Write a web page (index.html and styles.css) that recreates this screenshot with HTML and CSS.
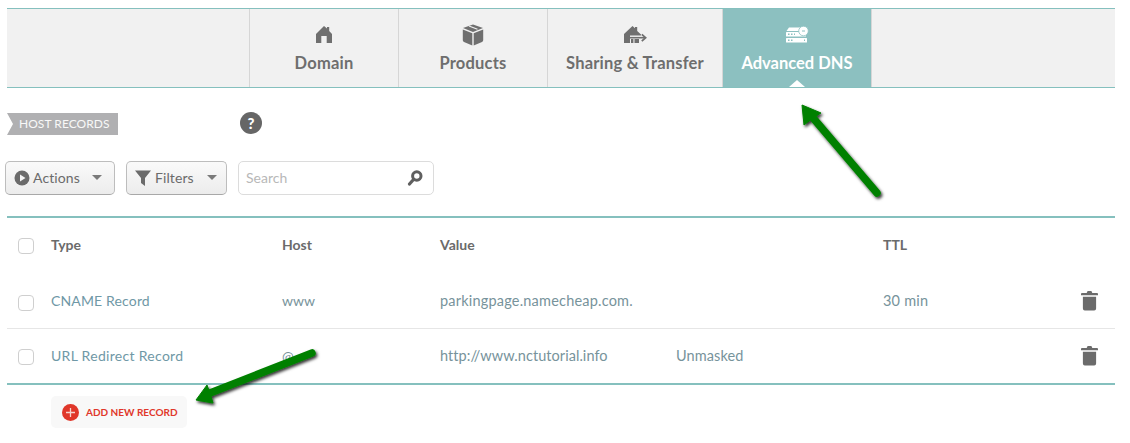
FILE: index.html
```html
<!DOCTYPE html>
<html lang="en">
<head>
<meta charset="utf-8">
<title>Advanced DNS</title>
<link rel="stylesheet" href="styles.css">
</head>
<body>
<div class="page">
  <nav class="tabs">
    <a class="tab tab-domain">
      <svg class="tab-icon" width="16" height="17" viewBox="0 0 16 17"><path d="M8 0 11 2.500V1h2.200V5L16 8V17H10.700V10H5.300V17H0V8Z" fill="#6f6f6f"/></svg>
      <span>Domain</span>
    </a>
    <a class="tab tab-products">
      <svg class="tab-icon" width="22" height="22" viewBox="0 0 22 22"><path d="M11 .5 21 4 11 8 1 4Z" fill="#6f6f6f"/><path d="M.8 5.500 10.300 9.300V21.500L2 18a2 2 0 0 1-1.200-1.800ZM21.200 5.500 11.700 9.300V21.500L20 18a2 2 0 0 0 1.200-1.800Z" fill="#6f6f6f"/><path d="M7 2 15.500 5.300" stroke="#f1f1f1" stroke-width="1.200"/></svg>
      <span>Products</span>
    </a>
    <a class="tab tab-sharing">
      <svg class="tab-icon" width="23" height="17" viewBox="0 0 23 17"><path d="M8.500 0 11 2.200V1h2.200V5L17 8.500V9.500H6V17H0V8Z" fill="#6f6f6f"/><path d="M6 11.700H21" stroke="#6f6f6f" stroke-width="1.600"/><path d="M7 13H9.400V17H7ZM10.500 13H15V17H10.500Z" fill="#6f6f6f"/><path d="m17.800 8.300 3.800 3.400-3.800 3.400" stroke="#6f6f6f" stroke-width="1.800" fill="none"/></svg>
      <span>Sharing &amp; Transfer</span>
    </a>
    <a class="tab tab-active">
      <svg class="tab-icon" width="24" height="18" viewBox="0 0 24 18"><path d="M4 1.500h11.500L17 5H1.500Z" fill="#fff"/><rect x="1" y="6" width="20" height="4.500" rx=".5" fill="#fff"/><rect x="1" y="12" width="21" height="4.500" rx=".5" fill="#fff"/><circle cx="18.500" cy="5" r="4.800" fill="#fff" stroke="#8cc0c0" stroke-width=".8"/><path d="M17 5h3" stroke="#8cc0c0"/><path d="M3 8.200h1.500M6 8.200h1.500M3 14.200h1.500M6 14.200h1.500M19 14.200h1M9 8.200h1" stroke="#8cc0c0" stroke-width="1.500"/></svg>
      <span>Advanced DNS</span>
    </a>
  </nav>

  <div class="section-head">
    <span class="ribbon">HOST RECORDS</span>
    <span class="help">?</span>
  </div>

  <div class="toolbar">
    <button class="btn btn-actions">
      <svg width="16" height="16" viewBox="0 0 16 16"><circle cx="8" cy="8" r="7.500" fill="#6b6b6b"/><path d="M6 4.500 11.500 8 6 11.500Z" fill="#f3f3f3"/></svg>
      <span class="btn-label">Actions</span>
      <i class="caret"></i>
    </button>
    <button class="btn btn-filters">
      <svg width="16" height="16" viewBox="0 0 16 16"><path d="M0 .5h16L10 8v8L6 13V8Z" fill="#6b6b6b"/></svg>
      <span class="btn-label">Filters</span>
      <i class="caret"></i>
    </button>
    <div class="search">
      <span class="btn-label">Search</span>
      <svg width="16" height="16" viewBox="0 0 16 16"><circle cx="9.800" cy="6" r="4.200" fill="none" stroke="#5f5f5f" stroke-width="3"/><path d="M6.500 9.500 2.500 14" stroke="#5f5f5f" stroke-width="3.200" stroke-linecap="round"/></svg>
    </div>
  </div>

  <div class="table">
    <div class="row row-head">
      <span class="check"></span>
      <span>Type</span>
      <span>Host</span>
      <span>Value</span>
      <span>TTL</span>
    </div>
    <div class="row row-one">
      <span class="check"></span>
      <span class="cell-type cell-cname">CNAME Record</span>
      <span class="cell-plain">www</span>
      <span class="cell-long">parkingpage.namecheap.com.</span>
      <span class="cell-long">30 min</span>
      <svg class="trash" width="17" height="21" viewBox="0 0 18 21"><path d="M6 2.500 7 .5h4l1 2h5a1 1 0 0 1 1 1V5H0V3.500a1 1 0 0 1 1-1ZM2 6.500h14V19a2 2 0 0 1-2 2H4a2 2 0 0 1-2-2Z" fill="#6b6b6b"/></svg>
    </div>
    <div class="row row-two">
      <span class="check"></span>
      <span class="cell-type cell-url">URL Redirect Record</span>
      <span class="cell-plain">@</span>
      <span class="cell-value cell-long"><span class="value-url">http://www.nctutorial.info</span><span class="value-mask">Unmasked</span></span>
      <span></span>
      <svg class="trash" width="17" height="21" viewBox="0 0 18 21"><path d="M6 2.500 7 .5h4l1 2h5a1 1 0 0 1 1 1V5H0V3.500a1 1 0 0 1 1-1ZM2 6.500h14V19a2 2 0 0 1-2 2H4a2 2 0 0 1-2-2Z" fill="#6b6b6b"/></svg>
    </div>
  </div>

  <button class="add-record">
    <svg width="17" height="17" viewBox="0 0 17 17"><circle cx="8.500" cy="8.500" r="8.500" fill="#e0372a"/><path d="M8.500 4v9M4 8.500h9" stroke="#f6d5d0" stroke-width="1.300"/></svg>
    <span>ADD NEW RECORD</span>
  </button>
</div>

<svg class="arrow arrow-up" width="90" height="105" viewBox="0 0 90 105">
  <defs><filter id="sh" x="-30%" y="-30%" width="160%" height="160%"><feDropShadow dx="1.500" dy="2" stdDeviation="1.500" flood-color="#000" flood-opacity=".8"/></filter></defs>
  <g filter="url(#sh)"><path d="M77 93 14 19" stroke="#008000" stroke-width="7.500" stroke-linecap="round"/><path d="M2 5 21 13 13 18 4 25Z" fill="#008000" stroke="#008000" stroke-linejoin="round"/></g>
</svg>
<svg class="arrow arrow-down" width="130" height="65" viewBox="0 0 130 65">
  <g filter="url(#sh)"><path d="M119 8 17 48" stroke="#008000" stroke-width="7.500" stroke-linecap="round"/><path d="M3 55 14 40 17 48 20 58Z" fill="#008000" stroke="#008000" stroke-linejoin="round"/></g>
</svg>
</body>
</html>
```
FILE: styles.css
```css
* { box-sizing: border-box; }
html, body { margin: 0; padding: 0; background: #fff; }
body {
  width: 1130px;
  height: 443px;
  overflow: hidden;
  position: relative;
  font-family: "Lato", "Open Sans", sans-serif;
  color: #6b6b6b;
}
.page { padding: 8px 15px 0 7px; }

.tabs {
  display: flex;
  height: 80px;
  padding-left: 242px;
  background: #f1f1f1;
  border-top: 1px solid #85c0be;
  border-bottom: 1px solid #85c0be;
}
.tab {
  display: flex;
  flex-direction: column;
  align-items: center;
  border-left: 1px solid #d6d6d6;
  font-size: 16.5px;
  font-weight: 700;
  letter-spacing: .2px;
  color: #6e6e6e;
  width: 149px;
  position: relative;
}
.tab span { position: absolute; top: 44px; white-space: nowrap; }
.tab-icon { position: absolute; }
.tab-domain .tab-icon { top: 17px; }
.tab-products .tab-icon { top: 15px; }
.tab-sharing { width: 175px; }
.tab-sharing .tab-icon { top: 17px; }
.tab-active {
  width: 150px;
  background: #8cc0c0;
  color: #fff;
  letter-spacing: 0;
  border-left: 1px solid #d6d6d6;
  border-right: 1px solid #d6d6d6;
}
.tab-active .tab-icon { top: 17px; }
.tab-active::after {
  content: "";
  position: absolute;
  left: 66px;
  bottom: 0;
  border-left: 8px solid transparent;
  border-right: 8px solid transparent;
  border-bottom: 7px solid #fff;
}

.section-head {
  display: flex;
  align-items: center;
  margin-top: 24px;
  height: 24px;
}
.ribbon {
  width: 111px;
  height: 22px;
  background: #b0b0b2;
  color: #f8f8f8;
  font-size: 12px;
  letter-spacing: .05px;
  line-height: 22px;
  padding-left: 12px;
  white-space: nowrap;
  clip-path: polygon(0 0, 100% 0, 100% 100%, 0 100%, 6px 50%);
}
.help {
  width: 22px;
  height: 22px;
  margin: 0 0 2px 122px;
  border-radius: 50%;
  background: #666;
  color: #fff;
  font-size: 15px;
  font-weight: 900;
  text-align: center;
  line-height: 22px;
}

.toolbar {
  display: flex;
  margin: 25px 0 0 -2px;
  height: 34px;
}
.btn {
  display: flex;
  align-items: center;
  height: 34px;
  border: 1px solid #bdbdbd;
  border-bottom-color: #a8a8a8;
  border-radius: 5px;
  background: linear-gradient(#fafafa, #ececec);
  font: 400 14px "Lato", sans-serif;
  letter-spacing: .1px;
  color: #6b6b6b;
  padding: 0 0 0 8px;
}
.btn-label { margin-bottom: 2px; }
.btn-actions { width: 110px; gap: 3px; }
.btn-filters { width: 101px; margin-left: 11px; gap: 4px; }
.caret {
  display: block;
  margin: 0 0 2px 9px;
  border-left: 5px solid transparent;
  border-right: 5px solid transparent;
  border-top: 5px solid #7a7a7a;
}
.search {
  display: flex;
  align-items: center;
  justify-content: space-between;
  width: 196px;
  height: 34px;
  margin-left: 11px;
  padding: 0 10px 0 7px;
  border: 1px solid #dcdcdc;
  border-radius: 5px;
  font-size: 14px;
  color: #b8b8b8;
}

.table {
  margin-top: 21px;
  height: 169px;
  border-top: 2px solid #85c0be;
  border-bottom: 2px solid #85c0be;
}
.row {
  display: grid;
  grid-template-columns: 44px 231px 158px 443px 1fr 18px;
  align-items: center;
  padding-right: 17px;
  font-size: 14px;
  color: #77939b;
  position: relative;
}
.row > span:not(.check), .row > svg { margin-bottom: 4px; }
.row > .check { margin-left: 11px; }
.row-head {
  height: 56px;
  font-weight: 700;
  color: #6b6b6b;
}
.row-one {
  height: 55px;
  padding-top: 3px;
  border-bottom: 1px solid #e6e6e6;
}
.row-two { height: 54px; padding-top: 2px; }
.cell-type { color: #6f98a6; }
.cell-cname { letter-spacing: .15px; }
.cell-url { letter-spacing: .3px; }
.cell-long { font-size: 14.5px; letter-spacing: .2px; }
.check {
  display: block;
  width: 16px;
  height: 16px;
  border: 1px solid #cfcfcf;
  border-radius: 4px;
  background: #fff;
}
.cell-value { display: flex; }
.value-url { width: 236px; letter-spacing: .05px; }
.value-mask { letter-spacing: .1px; }
.trash { display: block; margin-left: 1px; }

.add-record {
  display: flex;
  align-items: center;
  gap: 7px;
  width: 136px;
  height: 32px;
  margin: 11px 0 0 44px;
  padding: 0 0 0 11px;
  border: 0;
  border-radius: 5px;
  background: #f8f8f8;
  color: #e0372a;
  font: 700 10px "Lato", sans-serif;
  white-space: nowrap;
}

.arrow { position: absolute; overflow: visible; }
.arrow-up { left: 800px; top: 100px; }
.arrow-down { left: 193px; top: 345px; }
```
